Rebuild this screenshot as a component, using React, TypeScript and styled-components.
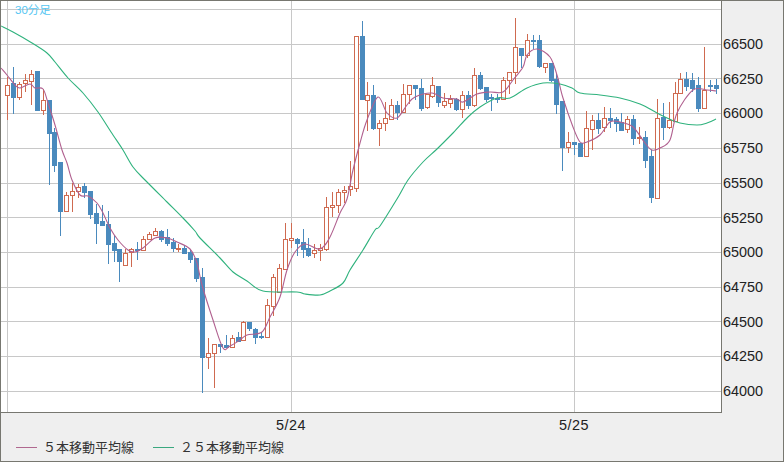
import React from "react";
import styled, { createGlobalStyle } from "styled-components";

const GlobalStyle = createGlobalStyle`
  html, body { margin: 0; padding: 0; background: #efefef; }
`;

const FONT = `"Liberation Sans", "Noto Sans CJK JP", sans-serif`;

const Frame = styled.div`
  width: 784px;
  height: 462px;
  box-sizing: border-box;
  border: 1px solid #777770;
  background: #efefef;
  display: flex;
  flex-direction: column;
  font-family: ${FONT};
  color: #222;
  overflow: hidden;
`;
const TopRow = styled.div`
  display: flex;
  height: 412px;
  flex: none;
`;
const Plot = styled.div`
  position: relative;
  width: 721px;
  height: 412px;
  box-sizing: border-box;
  border-right: 1px solid #777770;
  border-bottom: 1px solid #777770;
  background: #fff;
  flex: none;
`;
const Timeframe = styled.div`
  position: absolute;
  left: 14px;
  top: 2px;
  font-size: 11.5px;
  line-height: 15px;
  color: #55c6f2;
`;
const ChartSvg = styled.svg`
  display: block;
  width: 720px;
  height: 411px;
`;
const PriceAxis = styled.div`
  flex: 1;
  padding: 25.6px 0 0 1px;
  display: grid;
  grid-auto-rows: 34.72px;
  align-items: center;
`;
const PriceLabel = styled.div`
  font-size: 14.4px;
  line-height: 16px;
`;
const DateAxis = styled.div`
  height: 24px;
  flex: none;
  display: flex;
  align-items: center;
`;
const DateLabel = styled.div<{ $gap: number }>`
  width: 60px;
  margin-left: ${(p) => p.$gap}px;
  text-align: center;
  font-size: 14.4px;
  letter-spacing: 0.5px;
  line-height: 16px;
`;
const Legend = styled.div`
  flex: 1;
  display: flex;
  align-items: center;
  padding-left: 15px;
  padding-bottom: 3px;
`;
const LegendItem = styled.div`
  display: flex;
  align-items: center;
  gap: 6px;
  margin-right: 19px;
  font-size: 13px;
  line-height: 16px;
  color: #333;
`;
const LegendLine = styled.span<{ $color: string }>`
  width: 21px;
  height: 1px;
  background: ${(p) => p.$color};
`;
const GridLine = styled.line`
  stroke: #c8c8c8;
  stroke-width: 1;
  shape-rendering: crispEdges;
`;
const Wick = styled.line<{ $up: boolean }>`
  stroke: ${(p) => (p.$up ? "#cf6a50" : "#4a8abd")};
  stroke-width: 1;
  shape-rendering: crispEdges;
`;
const UpBody = styled.rect`
  fill: #fff;
  stroke: #cf6a50;
  stroke-width: 1;
  shape-rendering: crispEdges;
`;
const DownBody = styled.rect`
  fill: #4a8abd;
  shape-rendering: crispEdges;
`;
const MaLine = styled.path<{ $color: string }>`
  fill: none;
  stroke: ${(p) => p.$color};
  stroke-width: 1.1;
`;

const MA5_COLOR = "#b0608f";
const MA25_COLOR = "#2fb27d";

// [up, high, low, bodyTop, bodyBottom] in chart pixels
const CANDLES: number[][] = [
  [1,77,119,85,95],[0,67,113,83,97],[1,82,99,84,97],[1,74,91,80,83],[1,70,104,74,81],
  [0,71,110,71,110],[1,89,114,100,110],[0,100,184,100,133],[0,128,171,132,165],[0,162,235,162,211],
  [1,192,211,195,211],[1,183,211,191,195],[1,184,197,187,191],[0,183,197,186,192],[0,191,218,191,214],
  [0,204,243,213,223],[0,205,225,221,225],[0,211,263,224,244],[0,235,261,243,250],[0,249,281,249,261],
  [1,249,265,253,265],[1,248,266,249,252],[0,242,259,249,250],[1,236,250,239,250],[1,232,239,234,239],
  [1,228,235,231,235],[0,230,241,231,239],[0,229,245,237,243],[0,238,251,242,248],[1,244,251,248,249],
  [0,246,253,248,253],[0,249,262,252,259],[0,258,281,258,278],[0,268,392,277,357],[1,338,368,353,357],
  [1,344,387,344,353],[0,344,352,344,346],[0,335,347,345,347],[1,335,347,338,347],[0,332,341,337,341],
  [1,321,340,322,340],[0,322,330,322,328],[0,328,343,329,337],[0,332,338,336,337],[1,299,337,305,337],
  [1,274,315,277,306],[1,264,292,268,292],[1,223,269,239,269],[1,223,247,238,240],[0,238,255,239,243],
  [0,229,257,242,249],[0,238,256,248,255],[1,244,257,250,253],[1,244,260,248,250],[1,197,250,207,249],
  [1,192,216,205,207],[1,189,212,192,205],[1,186,202,190,192],[1,161,195,186,189],[1,36,191,36,188],
  [0,21,99,36,99],[1,82,130,95,100],[0,85,129,95,128],[1,120,145,123,128],[1,102,130,118,123],
  [1,99,119,105,119],[0,101,119,105,112],[1,84,112,94,112],[1,85,103,85,94],[0,85,99,85,88],
  [0,79,110,88,108],[1,94,108,94,107],[1,77,97,85,96],[0,86,106,86,102],[1,93,107,101,105],
  [1,95,107,99,103],[0,98,110,99,109],[1,91,117,95,109],[0,91,108,95,105],[1,68,106,75,105],
  [0,72,89,75,88],[0,87,101,87,99],[0,94,110,97,98],[0,94,102,98,99],[1,77,99,80,99],
  [1,72,93,72,80],[1,18,83,47,72],[0,48,67,48,55],[1,34,57,40,55],[0,35,48,40,41],
  [0,35,67,40,66],[1,63,72,63,67],[0,63,81,63,80],[0,73,113,79,104],[0,101,170,101,147],
  [1,132,152,142,147],[0,142,154,142,144],[0,143,156,143,156],[1,111,156,128,156],[1,115,149,120,129],
  [0,113,133,120,128],[1,107,131,118,127],[0,108,127,118,120],[0,117,131,119,123],[0,113,130,122,130],
  [1,116,132,119,129],[0,115,144,119,138],[1,127,143,137,138],[0,131,167,137,160],[0,150,202,156,197],
  [1,99,198,118,198],[0,103,139,117,127],[1,102,128,120,127],[1,82,121,93,121],[1,73,93,79,93],
  [0,72,90,79,86],[0,73,91,80,88],[0,77,111,85,108],[1,47,108,90,108],[0,80,91,85,86],
  [0,79,93,85,88],
];

const MA25 = "1,26 13,32 32,43 47,53 55,62 68,78 83,93 98,112 113,135 123,150 133,167 145,180 167,202 183,218 195,231 200,238 220,258 233,272 247,281 263,291 297,292 305,294 320,295 330,291 343,283 350,270 363,250 375,230 380,226 397,199 408,180 423,162 437,149 453,133 468,117 480,107 497,98 510,98 527,88 543,83 560,84 572,88 580,93 600,95 620,98 640,104 657,113 667,118 680,123 697,125 707,123 716,119";
const MA5 = "1,68 7,75 15,85 20,88 30,84 35,88 43,89 48,103 55,125 62,150 67,163 72,180 80,195 88,196 97,203 103,213 110,228 118,240 128,250 135,252 143,248 155,238 167,238 177,242 190,249 197,263 202,285 213,320 223,348 230,346 240,340 247,335 262,332 270,317 280,297 287,270 295,252 305,244 320,249 330,237 340,213 347,199 353,170 360,143 367,120 378,97 387,113 397,118 407,105 415,97 432,93 443,98 457,99 463,102 477,94 490,92 503,92 513,80 523,67 527,55 537,49 550,57 557,75 563,98 573,127 580,142 587,142 600,135 610,122 620,122 633,127 645,143 652,150 660,148 670,140 677,113 693,90 707,90 716,91";

// Catmull-Rom through the sampled points, so the averages bend instead of kinking.
function smooth(points: string): string {
  const p = points.split(" ").map((s) => s.split(",").map(Number));
  let d = `M${p[0][0]},${p[0][1]}`;
  for (let i = 0; i < p.length - 1; i++) {
    const a = p[Math.max(i - 1, 0)];
    const b = p[i];
    const c = p[i + 1];
    const e = p[Math.min(i + 2, p.length - 1)];
    const c1x = b[0] + (c[0] - a[0]) / 6;
    const c1y = b[1] + (c[1] - a[1]) / 6;
    const c2x = c[0] - (e[0] - b[0]) / 6;
    const c2y = c[1] - (e[1] - b[1]) / 6;
    d += `C${c1x.toFixed(1)},${c1y.toFixed(1)} ${c2x.toFixed(1)},${c2y.toFixed(1)} ${c[0]},${c[1]}`;
  }
  return d;
}

const H_GRID = [9, 44, 78, 113, 148, 183, 217, 252, 287, 321, 356, 391];
const V_GRID = [7, 291, 574];
const PRICES = ["66500", "66250", "66000", "65750", "65500", "65250", "65000", "64750", "64500", "64250", "64000"];

function Candle({ index, data }: { index: number; data: number[] }) {
  const [up, high, low, top, bottom] = data;
  const col = Math.floor(7.7 + 5.906 * index);
  const isUp = up === 1;
  return (
    <g>
      <Wick $up={isUp} x1={col + 0.5} x2={col + 0.5} y1={high} y2={low + 1} />
      {isUp ? (
        <UpBody x={col - 1.5} y={top + 0.5} width={4} height={Math.max(bottom - top, 1)} />
      ) : (
        <DownBody x={col - 2} y={top} width={5} height={Math.max(bottom - top + 1, 2)} />
      )}
    </g>
  );
}

export default function App() {
  return (
    <>
      <GlobalStyle />
      <Frame>
        <TopRow>
          <Plot>
            <ChartSvg viewBox="1 1 720 411">
              {H_GRID.map((y) => (
                <GridLine key={y} x1={1} x2={721} y1={y + 0.5} y2={y + 0.5} />
              ))}
              {V_GRID.map((x) => (
                <GridLine key={x} x1={x + 0.5} x2={x + 0.5} y1={1} y2={412} />
              ))}
              {CANDLES.map((c, i) => (
                <Candle key={i} index={i} data={c} />
              ))}
              <MaLine $color={MA25_COLOR} d={smooth(MA25)} />
              <MaLine $color={MA5_COLOR} d={smooth(MA5)} />
            </ChartSvg>
            <Timeframe>30分足</Timeframe>
          </Plot>
          <PriceAxis>
            {PRICES.map((p) => (
              <PriceLabel key={p}>{p}</PriceLabel>
            ))}
          </PriceAxis>
        </TopRow>
        <DateAxis>
          <DateLabel $gap={260}>5/24</DateLabel>
          <DateLabel $gap={223}>5/25</DateLabel>
        </DateAxis>
        <Legend>
          <LegendItem>
            <LegendLine $color="#b0688f" />
            ５本移動平均線
          </LegendItem>
          <LegendItem>
            <LegendLine $color="#3aa87f" />
            ２５本移動平均線
          </LegendItem>
        </Legend>
      </Frame>
    </>
  );
}
